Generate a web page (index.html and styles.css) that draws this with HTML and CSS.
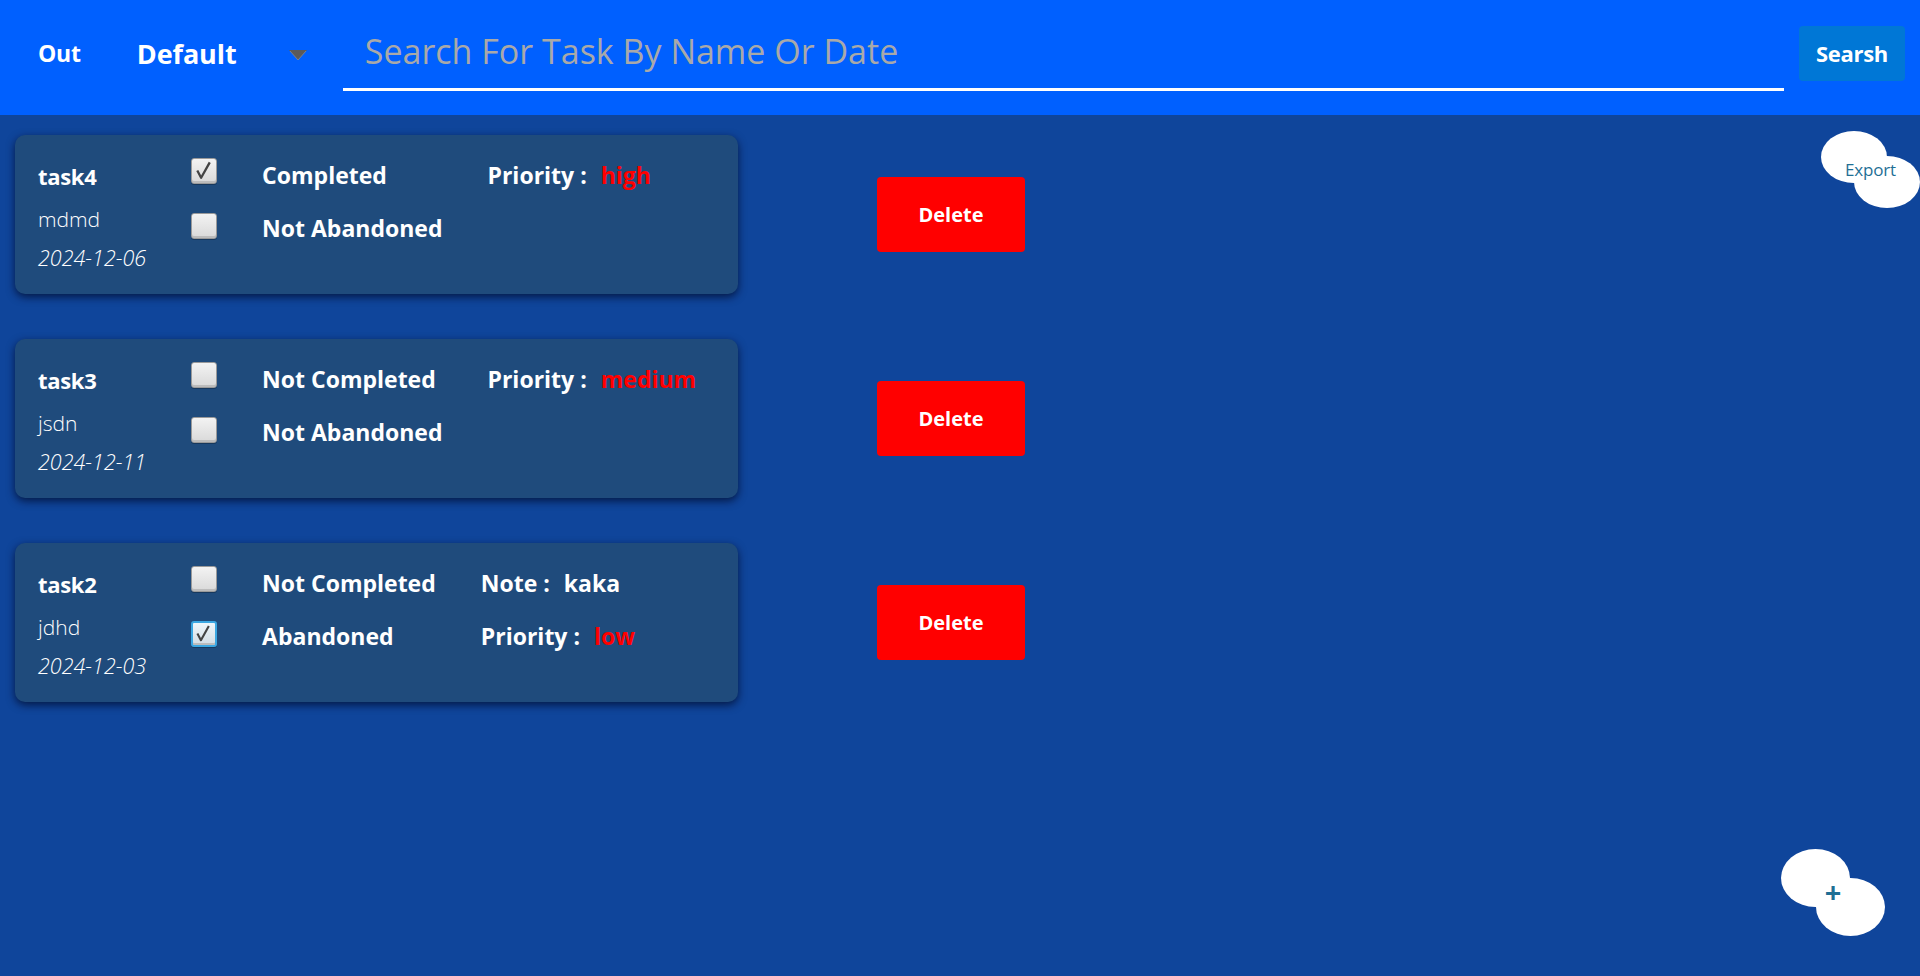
FILE: index.html
```html
<!DOCTYPE html>
<html lang="en">
<head>
<meta charset="utf-8">
<title>Tasks</title>
<link rel="stylesheet" href="styles.css">
</head>
<body>
<header class="topbar">
  <button class="out">Out</button>
  <div class="select">
    <span class="select-text">Default</span>
    <svg class="select-arrow" width="18" height="11" viewBox="0 0 18 11"><polygon points="0,0 18,0 9,10" fill="#5a5a5a"/><polyline points="1,1 9,10 17,1" fill="none" stroke="#8a8a8a" stroke-width="0.8"/></svg>
  </div>
  <div class="search">
    <input class="search-input" type="text" placeholder="Search For Task By Name Or Date">
  </div>
  <button class="search-btn">Searsh</button>
</header>

<main class="list">
  <div class="row">
    <div class="card">
      <div class="col info">
        <div class="name">task4</div>
        <div class="desc">mdmd</div>
        <div class="date">2024-12-06</div>
      </div>
      <div class="col checks">
        <span class="cb checked"><svg viewBox="0 0 25 25"><path d="M5.5 12 L9.5 19.5 L18.5 3.5" fill="none" stroke="#444" stroke-width="2.4" stroke-linejoin="round"/></svg></span>
        <span class="cb"></span>
      </div>
      <div class="col labels">
        <div class="label">Completed</div>
        <div class="label">Not Abandoned</div>
      </div>
      <div class="col labels">
        <div class="label">Priority :<span class="prio">high</span></div>
      </div>
    </div>
    <button class="delete">Delete</button>
  </div>

  <div class="row">
    <div class="card">
      <div class="col info">
        <div class="name">task3</div>
        <div class="desc">jsdn</div>
        <div class="date">2024-12-11</div>
      </div>
      <div class="col checks">
        <span class="cb"></span>
        <span class="cb"></span>
      </div>
      <div class="col labels">
        <div class="label">Not Completed</div>
        <div class="label">Not Abandoned</div>
      </div>
      <div class="col labels">
        <div class="label">Priority :<span class="prio">medium</span></div>
      </div>
    </div>
    <button class="delete">Delete</button>
  </div>

  <div class="row">
    <div class="card">
      <div class="col info">
        <div class="name">task2</div>
        <div class="desc">jdhd</div>
        <div class="date">2024-12-03</div>
      </div>
      <div class="col checks">
        <span class="cb"></span>
        <span class="cb checked focus"><svg viewBox="0 0 25 25"><path d="M5 12 L9 19.5 L18 3.5" fill="none" stroke="#444" stroke-width="2.4" stroke-linejoin="round"/></svg></span>
      </div>
      <div class="col labels">
        <div class="label">Not Completed</div>
        <div class="label">Abandoned</div>
      </div>
      <div class="col labels">
        <div class="label">Note :<span class="note">kaka</span></div>
        <div class="label">Priority :<span class="prio">low</span></div>
      </div>
    </div>
    <button class="delete">Delete</button>
  </div>
</main>

<button class="blob export"><span class="blob-text">Export</span></button>
<button class="blob add"><span class="blob-text plus">+</span></button>
</body>
</html>
```

FILE: styles.css
```css
* { box-sizing: border-box; }
html, body { margin: 0; padding: 0; }
body {
  width: 1920px;
  height: 976px;
  overflow: hidden;
  background: #0f459b;
  font-family: "Open Sans", "Noto Sans", sans-serif;
  color: #fff;
  position: relative;
}
button { font-family: inherit; border: none; cursor: pointer; }

.topbar {
  height: 115px;
  background: #0060ff;
  display: flex;
  align-items: center;
  padding-bottom: 9px;
}
.out {
  margin-left: 38px;
  background: transparent;
  color: #fff;
  font-weight: 700;
  font-size: 23px;
  padding: 0;
  letter-spacing: -0.2px;
}
.select {
  margin-left: 56px;
  width: 172px;
  display: flex;
  align-items: center;
  justify-content: space-between;
}
.select-text {
  font-weight: 700;
  font-size: 27px;
  letter-spacing: -0.1px;
}
.select-arrow { margin-top: 4px; margin-right: 2px; }
.search {
  flex: 1;
  margin-left: 34px;
  margin-right: 15px;
  align-self: flex-start;
  margin-top: 10px;
}
.search-input {
  display: block;
  width: 100%;
  height: 81px;
  background: transparent;
  border: none;
  border-bottom: 3px solid #fff;
  padding: 3px 0 0 22px;
  font-family: "Open Sans", "Noto Sans", sans-serif;
  font-size: 34px;
  font-weight: 400;
  color: #fff;
  outline: none;
  letter-spacing: 0;
}
.search-input::placeholder { color: #a9a9a9; }
.search-btn {
  width: 106px;
  height: 55px;
  margin-right: 15px;
  background: #0077d6;
  color: #fff;
  border-radius: 4px;
  font-weight: 700;
  font-size: 22px;
  padding: 0;
  letter-spacing: -0.3px;
}

.list {
  padding: 20px 0 0 15px;
  display: flex;
  flex-direction: column;
  gap: 45px;
}
.row {
  display: flex;
  align-items: center;
}
.card {
  width: 723px;
  height: 159px;
  background: #1f4b7c;
  border-radius: 10px;
  box-shadow: 0 3px 8px rgba(0, 10, 40, 0.75);
  padding: 19px 0 16px 23px;
  display: flex;
  gap: 45px;
}
.col { display: flex; flex-direction: column; }
.info .name {
  height: 44px;
  line-height: 44px;
  font-weight: 700;
  font-size: 22px;
  letter-spacing: -0.3px;
}
.info .desc {
  height: 40px;
  line-height: 42px;
  font-weight: 300;
  font-size: 21px;
}
.info .date {
  height: 40px;
  line-height: 40px;
  font-weight: 300;
  font-style: italic;
  font-size: 21.5px;
}
.checks {
  padding-top: 4px;
  gap: 29px;
}
.cb {
  display: block;
  width: 26px;
  height: 26px;
  border: 1px solid #9a9a9a;
  border-radius: 3px;
  background: linear-gradient(#f3f3f3, #d9d9d9);
  box-shadow: inset 0 -2px 0 #bcbcbc, 0 1px 0 rgba(0,0,0,0.25);
}
.cb svg { display: block; width: 24px; height: 24px; }
.cb.focus {
  border: 2px solid #3ba7e2;
  background: linear-gradient(#eef6fb, #d3dde4);
}
.cb.focus svg { width: 22px; height: 22px; }
.labels {
  padding-top: 4px;
  gap: 19px;
}
.label {
  height: 34px;
  line-height: 34px;
  font-weight: 700;
  font-size: 23px;
  white-space: nowrap;
}
.prio { color: #ff0000; margin-left: 14px; }
.note { margin-left: 14px; }

.delete {
  margin-left: 139px;
  width: 148px;
  height: 75px;
  background: #ff0000;
  color: #fff;
  border-radius: 4px;
  font-weight: 700;
  font-size: 20px;
  padding: 0;
}

.blob {
  position: absolute;
  background: transparent;
  padding: 0;
  display: flex;
  align-items: center;
  justify-content: center;
}
.blob::before, .blob::after {
  content: "";
  position: absolute;
  background: #fff;
  border-radius: 50%;
}
.blob-text {
  position: relative;
  z-index: 1;
  color: #1f6f95;
}
.export {
  left: 1821px;
  top: 131px;
  width: 99px;
  height: 77px;
}
.export::before { left: 0; top: 0; width: 66px; height: 52px; }
.export::after { left: 33px; top: 25px; width: 66px; height: 52px; }
.export .blob-text { font-size: 17px; font-weight: 400; letter-spacing: -0.2px; }
.add {
  left: 1781px;
  top: 849px;
  width: 104px;
  height: 88px;
}
.add::before { left: 0; top: 0; width: 69px; height: 58px; }
.add::after { left: 35px; top: 29px; width: 69px; height: 58px; }
.add .blob-text.plus { font-size: 29px; font-weight: 700; line-height: 1; margin-top: -4px; }
```
